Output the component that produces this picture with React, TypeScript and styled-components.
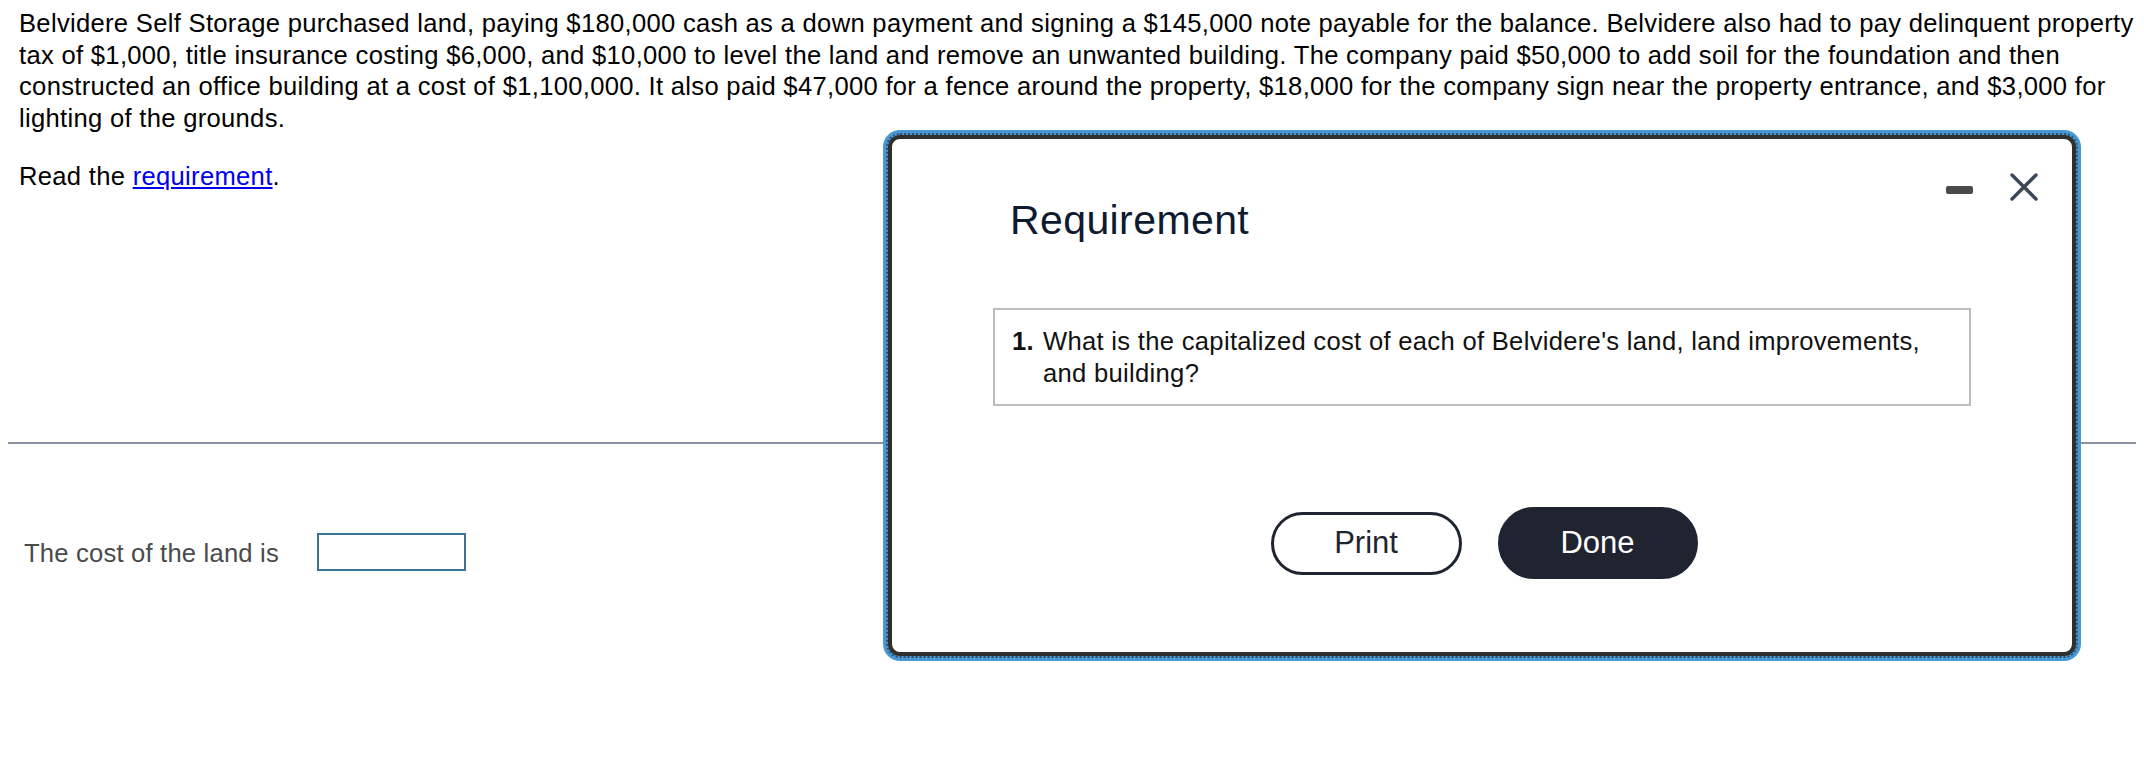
import React from "react";
import styled, { createGlobalStyle } from "styled-components";

const GlobalStyle = createGlobalStyle`
  body {
    margin: 8px;
    background: #fff;
    font-family: "Liberation Sans", Arial, Helvetica, sans-serif;
  }
`;

const Page = styled.div`
  position: relative;
  width: 2128px;
  height: 746px;
`;

const Problem = styled.p<{ $gap?: number }>`
  margin: ${(p) => p.$gap ?? 0}px 0 0;
  padding: 0 0 0 11px;
  font-size: 25.6px;
  line-height: 31.7px;
  letter-spacing: 0.3px;
  color: #000;
`;

const Link = styled.a`
  color: #0000ee;
  text-decoration: underline;
  cursor: pointer;
`;

const Divider = styled.hr`
  margin: 249px 0 0;
  border: 0;
  height: 2px;
  background: #8a93a0;
`;

const AnswerRow = styled.div`
  display: flex;
  align-items: center;
  gap: 38px;
  margin-top: 89px;
  padding-left: 16px;
  font-size: 25.6px;
  line-height: 31.7px;
  letter-spacing: 0.2px;
  color: #4a4a4a;
`;

const AnswerLabel = styled.span`
  padding-top: 5px;
`;

const AnswerInput = styled.input`
  box-sizing: border-box;
  width: 149px;
  height: 38px;
  border: 2px solid #3a7490;
  background: #fff;
  outline: none;
`;

// the requirement popup sits over the page
const Dialog = styled.div`
  position: absolute;
  left: 880px;
  top: 127px;
  box-sizing: border-box;
  width: 1188px;
  height: 521px;
  display: flex;
  flex-direction: column;
  background: #fff;
  border: 4px solid #2f2f2f;
  border-radius: 12px;
  outline: 2px dotted #35506a;
  outline-offset: 0;
  box-shadow: 0 0 0 5px #4898d4;
`;

const Header = styled.div`
  display: flex;
  align-items: flex-start;
  padding: 34px 34px 0 118px;
`;

const Title = styled.h2`
  flex: 1;
  margin: 23px 0 0;
  font-size: 41px;
  line-height: 49px;
  font-weight: 400;
  letter-spacing: 0.4px;
  color: #0e1a30;
`;

const WindowControls = styled.div`
  display: flex;
  align-items: center;
  gap: 37px;
  height: 28px;
`;

const Minimize = styled.button`
  width: 27px;
  height: 8px;
  margin-top: 6px;
  padding: 0;
  border: 0;
  border-radius: 2px;
  background: #4a4a4a;
`;

const CloseButton = styled.button`
  display: flex;
  width: 28px;
  height: 28px;
  padding: 0;
  border: 0;
  background: none;
`;

const RequirementBox = styled.ol`
  margin: 63px 101px 0;
  padding: 16px 16px 15px 17px;
  border: 2px solid #bdbdbd;
  list-style: none;
  font-size: 25.6px;
  line-height: 31.7px;
  letter-spacing: 0.3px;
  color: #111;
`;

const Item = styled.li`
  display: flex;
`;

const Num = styled.span`
  flex: 0 0 auto;
  width: 31px;
  font-weight: 700;
`;

const Actions = styled.div`
  display: flex;
  justify-content: center;
  align-items: center;
  gap: 36px;
  margin-top: 101px;
  padding-left: 4px;
`;

const PillButton = styled.button<{ $primary?: boolean }>`
  box-sizing: border-box;
  width: ${(p) => (p.$primary ? 200 : 191)}px;
  height: ${(p) => (p.$primary ? 72 : 63)}px;
  border-radius: 40px;
  border: 3px solid #1f2530;
  background: ${(p) => (p.$primary ? "#1f2430" : "#fff")};
  color: ${(p) => (p.$primary ? "#fff" : "#1f2530")};
  font-family: "Liberation Sans", Arial, sans-serif;
  font-size: 31px;
  cursor: pointer;
`;

export default function App() {
  return (
    <>
      <GlobalStyle />
      <Page>
        <Problem>
          Belvidere Self Storage purchased land, paying $180,000 cash as a down payment and
          signing a $145,000 note payable for the balance. Belvidere also had to pay delinquent
          property tax of $1,000, title insurance costing $6,000, and $10,000 to level the land
          and remove an unwanted building. The company paid $50,000 to add soil for the
          foundation and then constructed an office building at a cost of $1,100,000. It also
          paid $47,000 for a fence around the property, $18,000 for the company sign near the
          property entrance, and $3,000 for lighting of the grounds.
        </Problem>
        <Problem $gap={26}>
          Read the <Link>requirement</Link>.
        </Problem>
        <Divider />
        <AnswerRow>
          <AnswerLabel>The cost of the land is</AnswerLabel>
          <AnswerInput type="text" />
        </AnswerRow>

        <Dialog>
          <Header>
            <Title>Requirement</Title>
            <WindowControls>
              <Minimize aria-label="minimize" />
              <CloseButton aria-label="close">
                <svg width="28" height="28" viewBox="0 0 28 28">
                  <path
                    d="M2 2L26 26M26 2L2 26"
                    stroke="#3b4656"
                    strokeWidth="3.4"
                    strokeLinecap="round"
                    fill="none"
                  />
                </svg>
              </CloseButton>
            </WindowControls>
          </Header>
          <RequirementBox>
            <Item>
              <Num>1.</Num>
              <span>
                What is the capitalized cost of each of Belvidere's land, land improvements,
                and building?
              </span>
            </Item>
          </RequirementBox>
          <Actions>
            <PillButton>Print</PillButton>
            <PillButton $primary>Done</PillButton>
          </Actions>
        </Dialog>
      </Page>
    </>
  );
}
